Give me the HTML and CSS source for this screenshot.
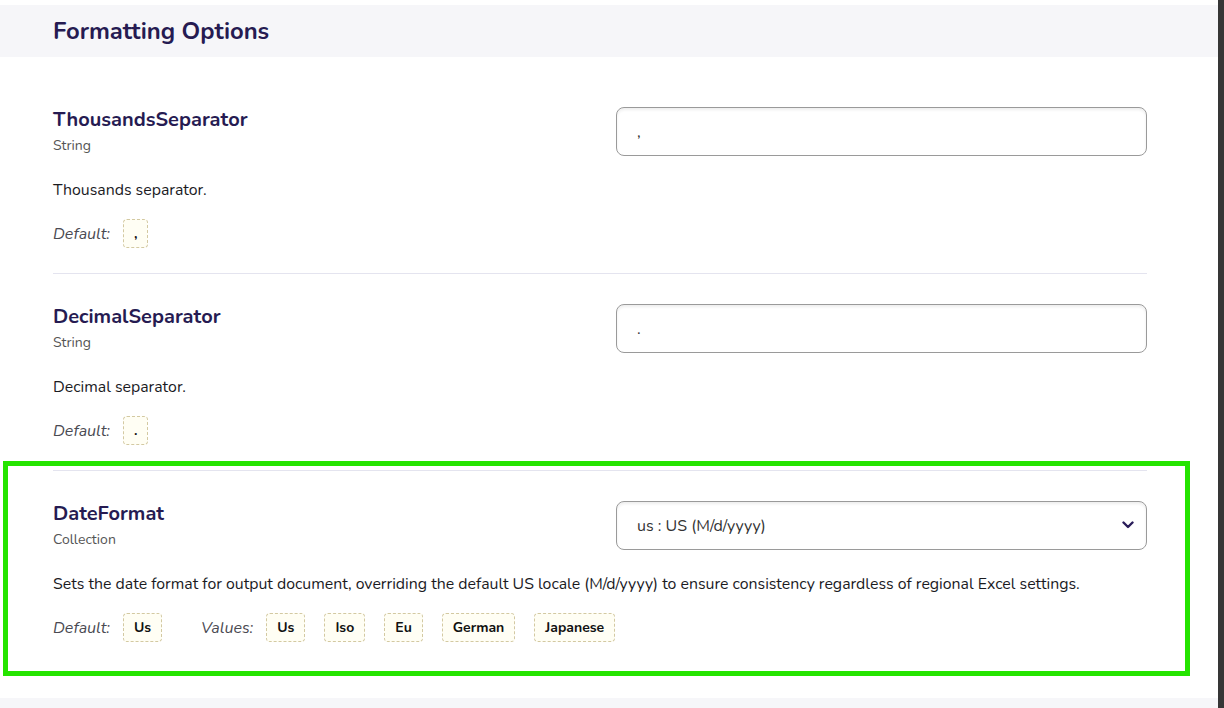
FILE: index.html
```html
<html>
<head>
  <meta charset="UTF-8">
  <title>Formatting Options</title>
  <link rel="stylesheet" href="styles.css">
</head>
<body>
  <div class="page">
    <div class="main">
      <div class="section-head">
        <h2>Formatting Options</h2>
      </div>

      <div class="options">
        <div class="option">
          <div class="option-top">
            <div class="option-name">
              <h3>ThousandsSeparator</h3>
              <div class="type">String</div>
            </div>
            <input class="field" type="text" value=",">
          </div>
          <p class="desc">Thousands separator.</p>
          <div class="meta">
            <span class="label">Default:</span>
            <span class="chip">,</span>
          </div>
        </div>

        <div class="option">
          <div class="option-top">
            <div class="option-name">
              <h3>DecimalSeparator</h3>
              <div class="type">String</div>
            </div>
            <input class="field" type="text" value=".">
          </div>
          <p class="desc">Decimal separator.</p>
          <div class="meta">
            <span class="label">Default:</span>
            <span class="chip">.</span>
          </div>
        </div>

        <div class="option">
          <div class="option-top">
            <div class="option-name">
              <h3>DateFormat</h3>
              <div class="type">Collection</div>
            </div>
            <div class="select-wrap">
              <select class="field select">
                <option>us : US (M/d/yyyy)</option>
                <option>iso : ISO (yyyy-MM-dd)</option>
                <option>eu : EU (dd/MM/yyyy)</option>
                <option>german : German (dd.MM.yyyy)</option>
                <option>japanese : Japanese (yyyy/MM/dd)</option>
              </select>
              <svg class="chevron" width="12" height="8" viewBox="0 0 12 8">
                <path d="M1.5 1.5 L6 6 L10.5 1.5" fill="none" stroke="#2a1d5a" stroke-width="2.4" stroke-linecap="round" stroke-linejoin="round"/>
              </svg>
            </div>
          </div>
          <p class="desc">Sets the date format for output document, overriding the default US locale (M/d/yyyy) to ensure consistency regardless of regional Excel settings.</p>
          <div class="meta">
            <span class="label">Default:</span>
            <span class="chip">Us</span>
            <span class="label values">Values:</span>
            <span class="chip">Us</span>
            <span class="chip">Iso</span>
            <span class="chip">Eu</span>
            <span class="chip">German</span>
            <span class="chip">Japanese</span>
          </div>
        </div>
      </div>

      <div class="section-foot"></div>

      <div class="highlight"></div>
    </div>
    <div class="scrollbar"></div>
  </div>
</body>
</html>
```

FILE: styles.css
```css
body {
  margin: 0;
  background: #fff;
  font-family: "Nunito", "Lato", "Noto Sans", sans-serif;
  color: #1b1b1f;
}
.page {
  display: flex;
  height: 708px;
  overflow: hidden;
}
.main {
  position: relative;
  flex: 1;
  padding-top: 5px;
}
.scrollbar {
  width: 6px;
  background: #363636;
}
.section-head {
  background: #f6f6f9;
  height: 52px;
  padding-left: 53px;
  display: flex;
  align-items: center;
}
.section-head h2 {
  margin: 0;
  font-size: 23.8px;
  font-weight: 700;
  color: #261b52;
}
.options {
  padding: 20px 71px 31px 53px;
}
.option {
  padding: 30px 0 25px;
  border-bottom: 1px solid #e4e4ef;
}
.option:last-child {
  border-bottom: none;
}
.option-top {
  display: flex;
  justify-content: space-between;
}
.option-name h3 {
  margin: 0;
  font-size: 20px;
  line-height: 26px;
  font-weight: 700;
  color: #261b52;
}
.type {
  margin-top: 2px;
  font-size: 14px;
  line-height: 21px;
  color: #555;
}
.field {
  box-sizing: border-box;
  width: 531px;
  height: 49px;
  border: 1px solid #9a9a9a;
  border-radius: 8px;
  padding: 0 20px;
  font-family: inherit;
  font-size: 16px;
  color: #333;
  background: #fff;
  box-shadow: inset 0 2px 3px rgba(0,0,0,0.07);
  outline: none;
}
.select-wrap {
  position: relative;
}
.select {
  appearance: none;
  -webkit-appearance: none;
}
.chevron {
  position: absolute;
  right: 13px;
  top: 20px;
}
.desc {
  margin: 23px 0 18px;
  font-size: 15.85px;
  line-height: 22px;
}
.meta {
  display: flex;
  align-items: center;
}
.label {
  font-style: italic;
  font-size: 16px;
  color: #4a4a52;
  margin-right: 13px;
}
.label.values {
  margin-left: 20px;
  margin-right: 13px;
}
.chip {
  height: 29px;
  box-sizing: border-box;
  padding: 0 10px;
  display: inline-flex;
  align-items: center;
  border: 1px dashed #d3c9a2;
  border-radius: 4px;
  background: #fffef4;
  font-size: 14px;
  font-weight: 700;
  color: #111;
  margin-right: 19px;
}
.section-foot {
  background: #f6f6f9;
  height: 20px;
}
.highlight {
  position: absolute;
  left: 3px;
  top: 461px;
  width: 1187px;
  height: 215px;
  box-sizing: border-box;
  border: 5px solid #25e400;
  pointer-events: none;
}
```
